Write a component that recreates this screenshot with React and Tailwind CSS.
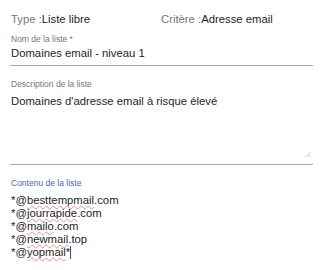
import React from "react";

const Sp = ({ children }) => (
  <span className="underline decoration-wavy decoration-[#ec8f8f] decoration-[1px] underline-offset-[1px] [text-decoration-skip-ink:none]">
    {children}
  </span>
);

export default function App() {
  return (
    <div
      className="w-[330px] h-[270px] bg-white pl-[10px] pr-[17px] pt-[13px] overflow-hidden text-[#1e1e1e]"
      style={{ fontFamily: '"Liberation Sans", Arial, sans-serif' }}
    >
      <div className="flex text-[11.3px] leading-[13px]">
        <div className="w-[151px] pl-[1px]">
          <span className="text-[#767676]">Type :</span>
          <span>Liste libre</span>
        </div>
        <div>
          <span className="text-[#767676]">Critère :</span>
          <span>Adresse email</span>
        </div>
      </div>

      <div className="mt-[8px] text-[8.5px] leading-[10px] text-[#757575] pl-[1px]">
        Nom de la liste *
      </div>
      <div className="mt-[3px] text-[11.3px] leading-[13px] pb-[5px] border-b border-[#a9a9a9] pl-[1px]">
        Domaines email - niveau 1
      </div>

      <div className="mt-[13px] text-[8.5px] leading-[10px] text-[#757575] pl-[1px]">
        Description de la liste
      </div>
      <div className="h-[76px] flex flex-col border-b border-[#a9a9a9] pt-[6px] pl-[1px]">
        <div className="text-[11.3px] leading-[13px]">
          Domaines d'adresse email à risque élevé
        </div>
        <svg
          className="mt-auto self-end mb-[6px] mr-[2px]"
          width="7"
          height="7"
          viewBox="0 0 7 7"
        >
          <line x1="6.5" y1="1" x2="1" y2="6.5" stroke="#c8c8c8" strokeWidth="1" />
          <line x1="6.5" y1="4" x2="4" y2="6.5" stroke="#c8c8c8" strokeWidth="1" />
        </svg>
      </div>

      <div className="mt-[13px] text-[8.5px] leading-[10px] text-[#4c5fc4] pl-[1px]">
        Contenu de la liste
      </div>
      <div className="mt-[6px] text-[11.3px] leading-[13px] pl-[1px]">
        <div>
          *@<Sp>besttempmail</Sp>.com
        </div>
        <div>
          *@<Sp>jourrapide</Sp>.com
        </div>
        <div>
          *@<Sp>mailo</Sp>.com
        </div>
        <div>
          *@<Sp>newmail</Sp>.top
        </div>
        <div className="flex items-center">
          <span>
            *@<Sp>yopmail</Sp>*
          </span>
          <span className="inline-block w-[1px] h-[13px] bg-[#2a4aa8]" />
        </div>
      </div>
    </div>
  );
}
